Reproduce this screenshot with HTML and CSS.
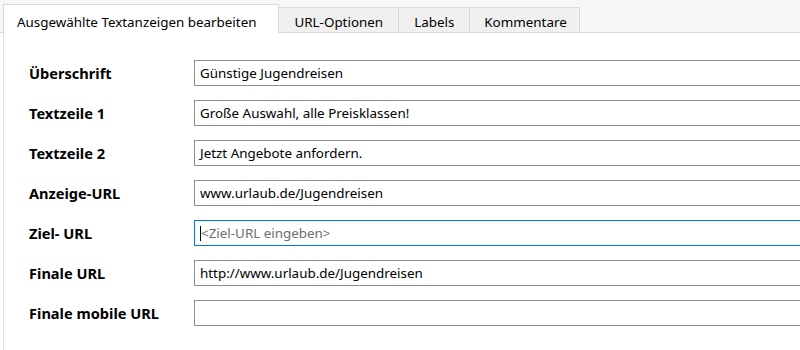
FILE: index.html
```html
<!DOCTYPE html>
<html lang="de">
<head>
<meta charset="utf-8">
<title>Textanzeigen bearbeiten</title>
<link rel="stylesheet" href="styles.css">
</head>
<body>
<div class="tabbar">
  <div class="tab active">Ausgewählte Textanzeigen bearbeiten</div>
  <div class="tab">URL-Optionen</div>
  <div class="tab">Labels</div>
  <div class="tab last">Kommentare</div>
</div>
<div class="panel">
  <div class="form">
    <div class="label">Überschrift</div>
    <div class="field">Günstige Jugendreisen</div>
    <div class="label">Textzeile 1</div>
    <div class="field">Große Auswahl, alle Preisklassen!</div>
    <div class="label">Textzeile 2</div>
    <div class="field">Jetzt Angebote anfordern.</div>
    <div class="label">Anzeige-URL</div>
    <div class="field">www.urlaub.de/Jugendreisen</div>
    <div class="label">Ziel- URL</div>
    <div class="field focused"><span class="caret"></span><span class="placeholder">&lt;Ziel-URL eingeben&gt;</span></div>
    <div class="label">Finale URL</div>
    <div class="field">http://www.urlaub.de/Jugendreisen</div>
    <div class="label">Finale mobile URL</div>
    <div class="field"></div>
  </div>
</div>
</body>
</html>
```

FILE: styles.css
```css
html, body {
  margin: 0;
  padding: 0;
  background: #ffffff;
  overflow: hidden;
}
body {
  width: 800px;
  height: 350px;
  font-family: "Noto Sans", "Open Sans", sans-serif;
  font-size: 13.4px;
  color: #000000;
}
.tabbar {
  display: flex;
  align-items: flex-end;
  box-sizing: border-box;
  height: 33px;
  padding-left: 3px;
  background: #f7f7f7;
  border-bottom: 1px solid #d9d9d9;
}
.tab {
  box-sizing: border-box;
  height: 25px;
  padding: 5px 15px 0 15px;
  background: #f0f0f0;
  border: 1px solid #d9d9d9;
  border-bottom: none;
  margin-left: -1px;
  line-height: 18px;
  white-space: nowrap;
}
.tab.last {
  padding: 5px 12px 0 14px;
}
.tab.active {
  height: 29px;
  margin-left: 0;
  margin-bottom: -1px;
  padding: 8px 22px 0 13px;
  background: #ffffff;
  position: relative;
  z-index: 1;
}
.panel {
  margin-left: 3px;
  border-left: 1px solid #e3e3e3;
  height: 317px;
  background: #ffffff;
}
.form {
  display: grid;
  grid-template-columns: 165px 640px;
  row-gap: 14px;
  padding: 27px 0 0 25px;
  align-items: center;
}
.label {
  font-weight: bold;
  font-size: 14.6px;
  white-space: nowrap;
}
.field {
  box-sizing: border-box;
  height: 26px;
  border: 1px solid #8e8e8e;
  padding: 0 5px;
  display: flex;
  align-items: center;
  white-space: nowrap;
}
.field.focused {
  border-color: #0078d7;
}
.caret {
  display: inline-block;
  width: 1px;
  height: 15px;
  background: #000000;
}
.placeholder {
  color: #6d6d6d;
}
```
